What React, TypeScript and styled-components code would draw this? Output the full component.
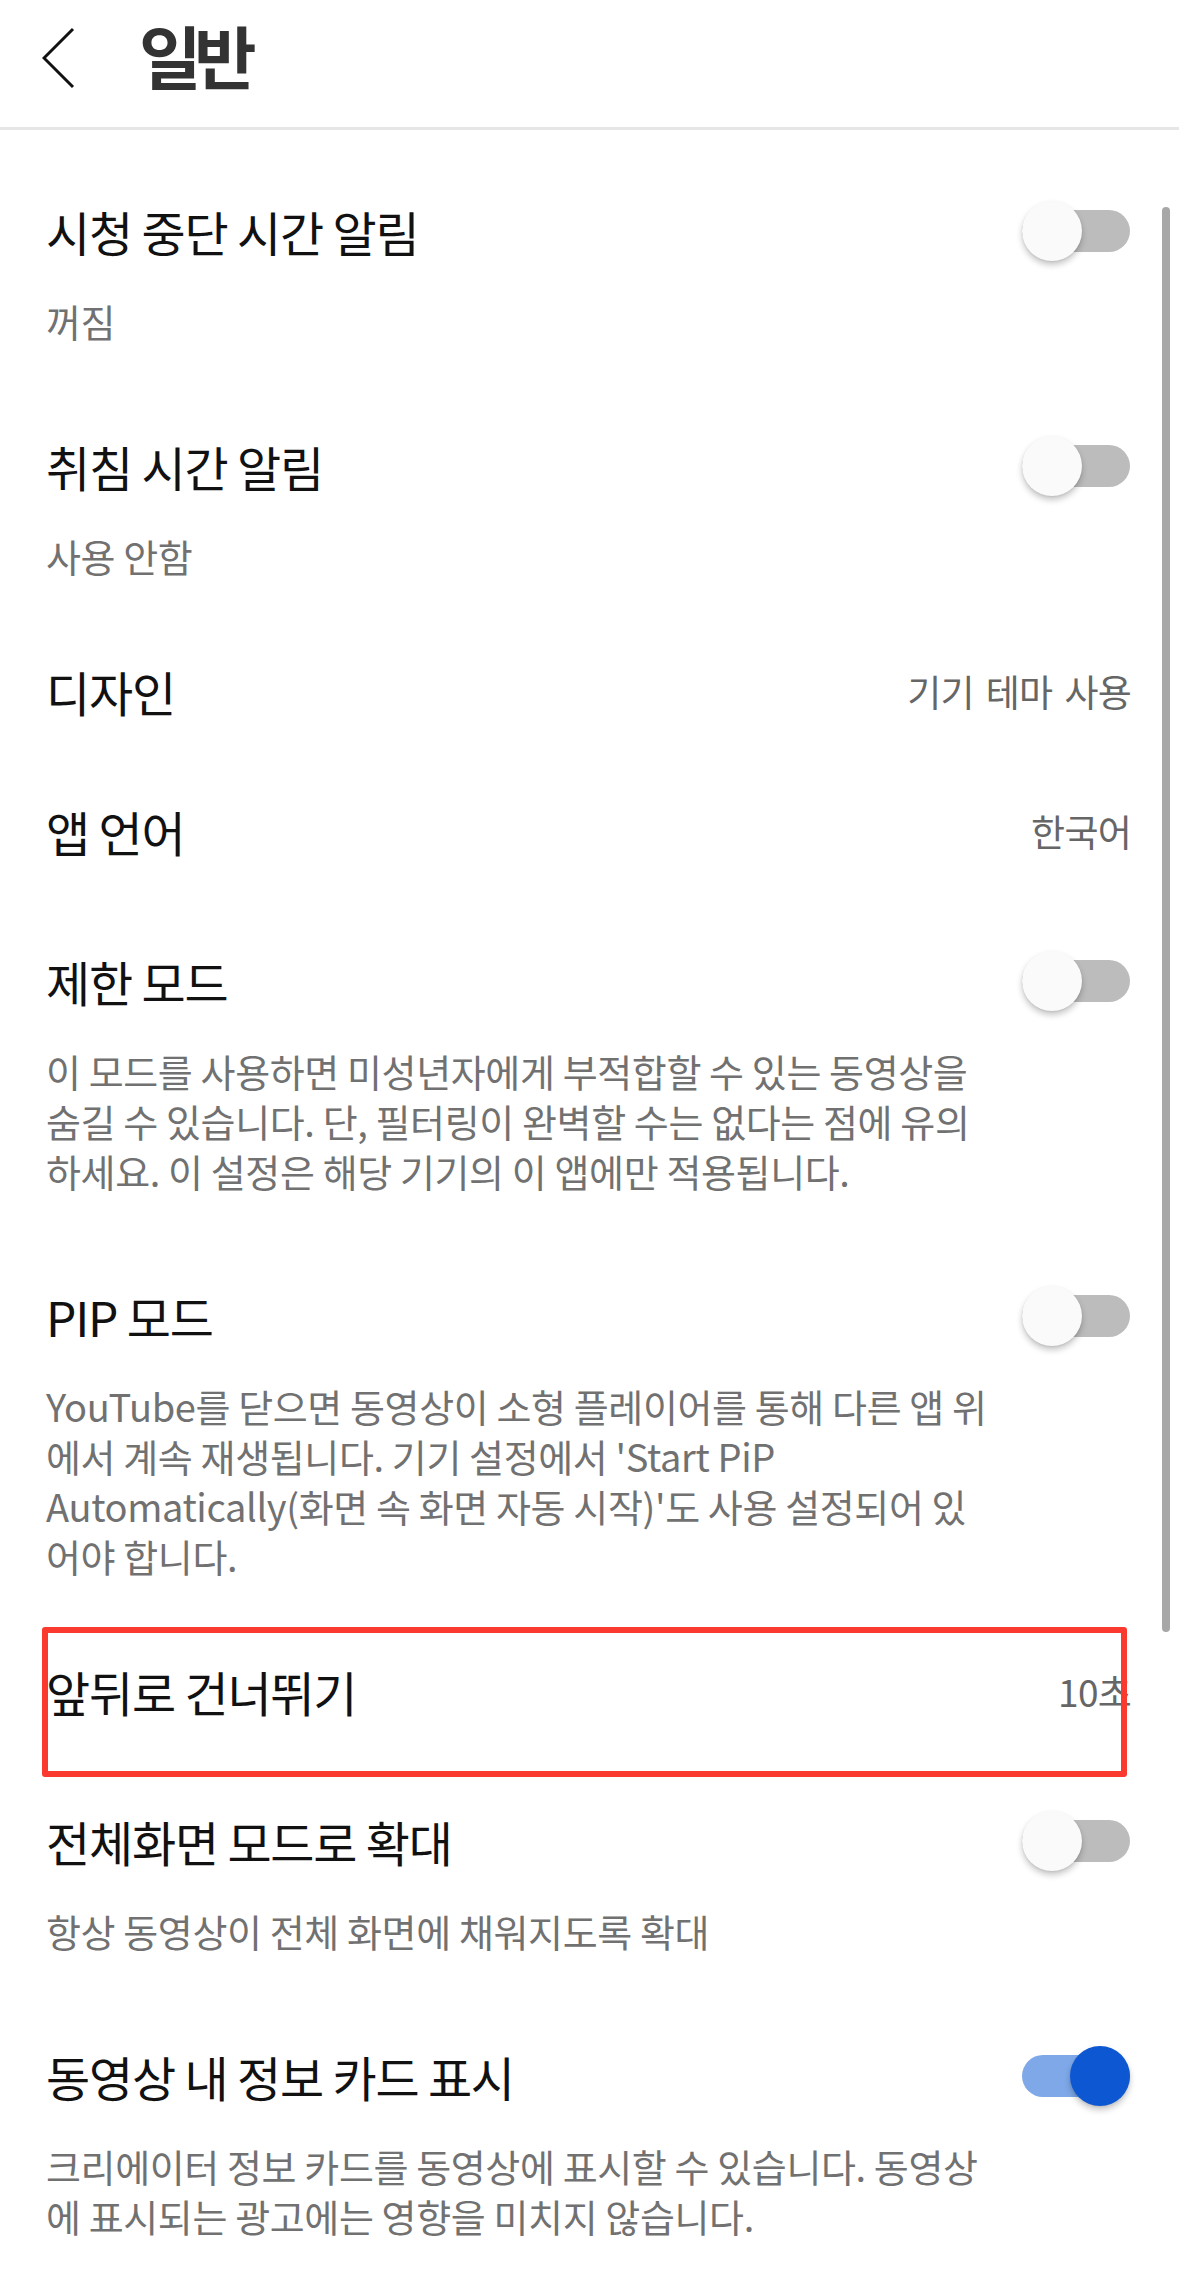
import styled, { createGlobalStyle, css } from 'styled-components';

const GlobalStyle = createGlobalStyle`
    html, body {
        margin: 0;
        padding: 0;
        background: #ffffff;
    }
    body {
        font-family: "Noto Sans CJK KR", "Noto Sans", sans-serif;
        color: #111111;
        -webkit-font-smoothing: antialiased;
    }
`;

interface Setting {
    title: string;
    value?: string;
    toggle?: boolean;
    on?: boolean;
    lines?: string[];
    highlight?: boolean;
}

const SETTINGS: Setting[] = [
    { title: '시청 중단 시간 알림', toggle: true, lines: ['꺼짐'] },
    { title: '취침 시간 알림', toggle: true, lines: ['사용 안함'] },
    { title: '디자인', value: '기기 테마 사용' },
    { title: '앱 언어', value: '한국어' },
    {
        title: '제한 모드',
        toggle: true,
        lines: [
            '이 모드를 사용하면 미성년자에게 부적합할 수 있는 동영상을',
            '숨길 수 있습니다. 단, 필터링이 완벽할 수는 없다는 점에 유의',
            '하세요. 이 설정은 해당 기기의 이 앱에만 적용됩니다.',
        ],
    },
    {
        title: 'PIP 모드',
        toggle: true,
        lines: [
            'YouTube를 닫으면 동영상이 소형 플레이어를 통해 다른 앱 위',
            "에서 계속 재생됩니다. 기기 설정에서 'Start PiP",
            "Automatically(화면 속 화면 자동 시작)'도 사용 설정되어 있",
            '어야 합니다.',
        ],
    },
    { title: '앞뒤로 건너뛰기', value: '10초', highlight: true },
    { title: '전체화면 모드로 확대', toggle: true, lines: ['항상 동영상이 전체 화면에 채워지도록 확대'] },
    {
        title: '동영상 내 정보 카드 표시',
        toggle: true,
        on: true,
        lines: [
            '크리에이터 정보 카드를 동영상에 표시할 수 있습니다. 동영상',
            '에 표시되는 광고에는 영향을 미치지 않습니다.',
        ],
    },
];

const BackIcon = () => (
    <svg width="33" height="62" viewBox="0 0 33 62" fill="none">
        <polyline points="31,2 2,31 31,60" stroke="#111111" strokeWidth="3" strokeLinejoin="miter" />
    </svg>
);

const App = () => {
    return (
        <Page>
            <GlobalStyle />
            <Header>
                <BackButton aria-label="뒤로">
                    <BackIcon />
                </BackButton>
                <HeaderTitle>일반</HeaderTitle>
            </Header>
            <List>
                {SETTINGS.map((s) => (
                    <Item key={s.title} $toggle={!!s.toggle} $highlight={!!s.highlight}>
                        <ItemHead>
                            <ItemTitle>{s.title}</ItemTitle>
                            {s.value && <ItemValue>{s.value}</ItemValue>}
                            {s.toggle && (
                                <Switch>
                                    <Track $on={!!s.on} />
                                    <Thumb $on={!!s.on} />
                                </Switch>
                            )}
                        </ItemHead>
                        {s.lines && (
                            <Description>
                                {s.lines.map((line) => (
                                    <Line key={line}>{line}</Line>
                                ))}
                            </Description>
                        )}
                    </Item>
                ))}
            </List>
            <ScrollIndicator />
        </Page>
    );
};

const Page = styled.div`
    position: relative;
    width: 1179px;
    min-height: 2277px;
    background: #ffffff;
    overflow: hidden;
`;

const Header = styled.header`
    display: flex;
    align-items: center;
    box-sizing: content-box;
    height: 115px;
    padding: 0 0 12px 42px;
    border-bottom: 3px solid #e6e6e6;
`;

const BackButton = styled.button`
    display: flex;
    align-items: center;
    padding: 0;
    margin: 0 64px 0 0;
    border: none;
    background: none;
    height: 62px;
`;

const HeaderTitle = styled.h1`
    margin: 0 0 6px;
    font-size: 68px;
    line-height: 76px;
    font-weight: 700;
    letter-spacing: -0.11em;
    color: #333333;
`;

const List = styled.div`
    display: flex;
    flex-direction: column;
    padding-top: 21px;
`;

const Item = styled.div<{ $toggle: boolean; $highlight: boolean }>`
    position: relative;
    display: flex;
    flex-direction: column;
    padding: ${({ $toggle }) => ($toggle ? '50px' : '40px')} 48px 40px 46px;

    ${({ $highlight }) =>
        $highlight &&
        css`
            &::after {
                content: '';
                position: absolute;
                top: 6px;
                bottom: -16px;
                left: 42px;
                right: 52px;
                border: 6px solid #fb3a2f;
                border-radius: 3px;
                pointer-events: none;
            }
        `}
`;

const ItemHead = styled.div`
    display: flex;
    align-items: center;
    justify-content: space-between;
    height: 60px;
`;

const ItemTitle = styled.div`
    font-size: 48px;
    line-height: 60px;
    letter-spacing: -0.025em;
    color: #111111;
    white-space: nowrap;
`;

const ItemValue = styled.div`
    font-size: 37px;
    line-height: 60px;
    letter-spacing: -0.02em;
    word-spacing: 0.12em;
    color: #666666;
    white-space: nowrap;
`;

const Description = styled.div`
    display: flex;
    flex-direction: column;
    margin-top: 35px;
    font-size: 38px;
    line-height: 50px;
    letter-spacing: -0.01em;
    color: #717171;
`;

const Line = styled.span`
    display: block;
    white-space: nowrap;
`;

const Switch = styled.div`
    position: relative;
    flex: none;
    width: 108px;
    height: 60px;
    margin-right: 1px;
`;

const Track = styled.div<{ $on: boolean }>`
    position: absolute;
    left: 0;
    right: 0;
    top: 9px;
    height: 42px;
    border-radius: 21px;
    background: ${({ $on }) => ($on ? '#7ea8e8' : '#bcbcbc')};
`;

const Thumb = styled.div<{ $on: boolean }>`
    position: absolute;
    top: 0;
    left: ${({ $on }) => ($on ? '48px' : '0')};
    width: 60px;
    height: 60px;
    border-radius: 50%;
    background: ${({ $on }) => ($on ? '#0d58d2' : '#fafafa')};
    box-shadow: 0 4px 6px rgba(0, 0, 0, 0.22), 0 1px 2px rgba(0, 0, 0, 0.08);
`;

const ScrollIndicator = styled.div`
    position: absolute;
    top: 207px;
    right: 9px;
    width: 8px;
    height: 1425px;
    border-radius: 4px;
    background: #a7a7a7;
`;

export default App;
